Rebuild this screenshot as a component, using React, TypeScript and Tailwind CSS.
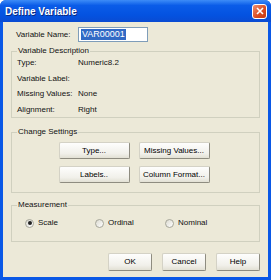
import React, { useState } from "react";

const font = { fontFamily: '"Liberation Sans", Arial, sans-serif' };

function XpButton({ children, className = "" }: { children: React.ReactNode; className?: string }) {
  return (
    <button
      className={`flex items-center justify-center rounded-[2px] border border-[#d4d2c6] border-b-[#8e8c80] border-r-[#8e8c80] bg-[linear-gradient(#fefefd,#f1f0ea_70%,#e2e0d4)] text-[8px] leading-none text-black ${className}`}
    >
      {children}
    </button>
  );
}

function Radio({ label, checked, onClick }: { label: string; checked: boolean; onClick: () => void }) {
  return (
    <div className="flex w-[70px] items-center gap-[4px]" onClick={onClick}>
      <span className="flex h-[9px] w-[9px] items-center justify-center rounded-full border border-[#a6a69a] bg-[linear-gradient(135deg,#dcdad0,#ffffff)]">
        {checked && <span className="h-[4px] w-[4px] rounded-full bg-[#222]" />}
      </span>
      <span>{label}</span>
    </div>
  );
}

export default function App() {
  const [measure, setMeasure] = useState("Scale");

  const rows = [
    ["Type:", "Numeric8.2"],
    ["Variable Label:", ""],
    ["Missing Values:", "None"],
    ["Alignment:", "Right"],
  ];

  return (
    <div className="h-[280px] w-[271px] bg-white" style={font}>
      <div className="flex h-[280px] w-[271px] flex-col overflow-hidden rounded-t-[6px] bg-[#0a58e6]">
        {/* Title bar */}
        <div className="flex h-[22px] items-center justify-between bg-[linear-gradient(#3d8cf7,#0a5ce8_25%,#0452e0_70%,#0a4bd2)] pl-[5px] pr-[4px]">
          <span className="text-[10px] font-bold text-white [text-shadow:1px_1px_0_#0a2a80]">Define Variable</span>
          <span className="flex h-[15px] w-[15px] items-center justify-center rounded-[3px] border border-white bg-[linear-gradient(135deg,#f09070,#d84a20_60%,#c43a12)]">
            <svg width="8" height="8" viewBox="0 0 8 8">
              <path d="M1 1L7 7M7 1L1 7" stroke="white" strokeWidth="1.6" />
            </svg>
          </span>
        </div>

        {/* Client area */}
        <div className="mx-[3px] mb-[3px] flex flex-1 flex-col bg-[#ece9d8] text-[8px] leading-[10px] text-[#111]">
          <div className="flex items-center pl-[13px] pt-[5px]">
            <span className="w-[62px]">Variable Name:</span>
            <div className="flex h-[15px] w-[70px] items-center border border-[#7f9db9] bg-white pl-[2px]">
              <span className="bg-[#316ac5] px-[1px] text-[9px] leading-[11px] text-white">VAR00001</span>
            </div>
          </div>

          <fieldset className="mx-[8px] mt-[5px] border border-[#d0d0bf] pl-[5px]">
            <legend className="px-[1px] leading-[8px]">Variable Description</legend>
            {rows.map(([k, v]) => (
              <div key={k} className="flex leading-[15.5px]">
                <span className="w-[61px]">{k}</span>
                <span>{v}</span>
              </div>
            ))}
          </fieldset>

          <fieldset className="mx-[8px] mt-[10px] border border-[#d0d0bf] pb-[9px] pl-[5px] pt-[6px]">
            <legend className="px-[1px] leading-[8px]">Change Settings</legend>
            <div className="grid grid-cols-[71px_71px] justify-center gap-x-[9px] gap-y-[7px] pr-[8px]">
              <XpButton className="h-[17px]">Type...</XpButton>
              <XpButton className="h-[17px]">Missing Values...</XpButton>
              <XpButton className="h-[17px]">Labels..</XpButton>
              <XpButton className="h-[17px]">Column Format...</XpButton>
            </div>
          </fieldset>

          <fieldset className="mx-[8px] mt-[8px] border border-[#d0d0bf] pb-[12px] pl-[13px] pt-[8px]">
            <legend className="ml-[-8px] px-[1px] leading-[8px]">Measurement</legend>
            <div className="flex h-[12px] items-center">
              {["Scale", "Ordinal", "Nominal"].map((m) => (
                <Radio key={m} label={m} checked={measure === m} onClick={() => setMeasure(m)} />
              ))}
            </div>
          </fieldset>

          <div className="mr-[8px] mt-[11px] flex justify-end gap-[10px]">
            <XpButton className="h-[18px] w-[44px]">OK</XpButton>
            <XpButton className="h-[18px] w-[44px]">Cancel</XpButton>
            <XpButton className="h-[18px] w-[44px]">Help</XpButton>
          </div>
        </div>
      </div>
    </div>
  );
}
